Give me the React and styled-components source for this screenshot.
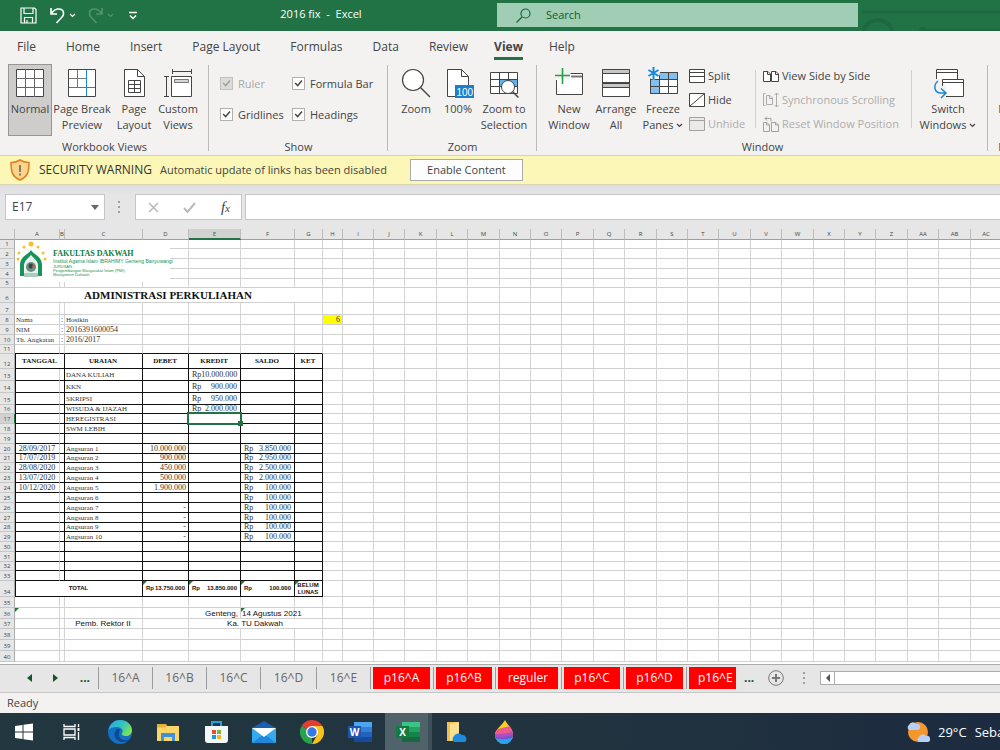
import React from "react";
import styled, { createGlobalStyle, css } from "styled-components";

const GlobalStyle = createGlobalStyle`
  *, *::before, *::after { box-sizing: border-box; }
  body { margin: 0; background: #e6e6e6; color: #444; font-family: "Open Sans", "Noto Sans", sans-serif; font-size: 11px; line-height: 16px; }
  button, input { font: inherit; color: inherit; margin: 0; padding: 0; border: 0; background: none; border-radius: 0; }
  a { color: inherit; text-decoration: none; }
  svg { display: block; flex: none; }
`;

const Page = styled.div`
  display: flex;
  flex-direction: column;
  height: 100vh;
  overflow: hidden;
`;

/* ---------- title bar ---------- */
const TitleBar = styled.header`
  display: grid;
  grid-template-columns: 145fr 352fr 361fr 142fr;
  align-items: center;
  height: 32px;
  flex: none;
  background: #217346;
  border-bottom: 1px solid #f8fbf9;
  color: #fff;
`;
const QuickAccess = styled.div`
  display: flex;
  align-items: center;
  padding-left: 20px;
`;
const QuickButton = styled.button`
  display: flex;
  align-items: center;
  gap: 4px;
  margin-right: ${(p) => p.$gap || 0}px;
  opacity: ${(p) => (p.disabled ? 0.22 : 1)};
`;
const DocTitle = styled.div`
  padding-bottom: 4px;
  text-align: center;
  white-space: pre;
`;
const SearchBox = styled.label`
  display: flex;
  align-items: center;
  gap: 15px;
  height: 24px;
  padding-left: 19px;
  margin-bottom: 1px;
  background: #a0ceb5;
  color: #0e5c2f;
  input { flex: 1; min-width: 0; outline: none; }
  input::placeholder { color: #0e5c2f; opacity: 1; }
`;
const TitleArt = styled.div`
  height: 31px;
  overflow: hidden;
`;

/* ---------- ribbon ---------- */
const TabRow = styled.nav`
  display: flex;
  flex: none;
  height: 29px;
  padding-left: 2px;
  background: #f3f2f1;
`;
const RibbonTab = styled.a`
  position: relative;
  padding: 0 ${(p) => (p.$active ? 11 : 15)}px;
  font-size: 12px;
  line-height: 30px;
  white-space: nowrap;
  font-weight: ${(p) => (p.$active ? 700 : 400)};
  ${(p) =>
    p.$active &&
    css`
      &::after {
        content: "";
        position: absolute;
        left: 11px;
        right: 11px;
        bottom: 1px;
        height: 3px;
        background: #217346;
      }
    `}
`;
const Ribbon = styled.section`
  display: flex;
  flex: none;
  height: 94px;
  overflow: hidden;
  background: #f3f2f1;
`;
const Group = styled.div`
  display: flex;
  flex: none;
  flex-direction: column;
  justify-content: space-between;
  width: ${(p) => p.$width}px;
  padding-top: 3px;
  position: relative;
  &::after {
    content: "";
    position: absolute;
    right: 0;
    top: 4px;
    bottom: 4px;
    width: 1px;
    background: #bcbab8;
  }
`;
const GroupBody = styled.div`
  display: flex;
  height: 72px;
  padding-left: ${(p) => p.$pad}px;
`;
const GroupLabel = styled.div`
  text-align: center;
  line-height: 16px;
`;
const BigButton = styled.button`
  display: flex;
  flex: none;
  flex-direction: column;
  align-items: center;
  width: ${(p) => p.$width}px;
  height: 72px;
  padding-top: 2px;
  line-height: 16px;
  white-space: nowrap;
  border: 1px solid ${(p) => (p.$active ? "#979593" : "transparent")};
  background: ${(p) => (p.$active ? "#cfcdcb" : "none")};
  svg { margin-bottom: 2px; }
`;
const LabelLine = styled.span`
  display: flex;
  align-items: center;
  gap: 3px;
  svg { margin-bottom: 0; }
`;
const CheckGrid = styled.div`
  display: grid;
  grid-template-columns: 72px auto;
  grid-auto-rows: 31px;
  padding: 4px 0 0 11px;
`;
const CheckLabel = styled.label`
  display: flex;
  align-items: center;
  gap: 5px;
  color: ${(p) => (p.$off ? "#a9a7a5" : "#444")};
  input {
    appearance: none;
    width: 13px;
    height: 13px;
    border: 1px solid ${(p) => (p.$off ? "#c3c1bf" : "#b3b1af")};
    background: ${(p) => (p.$off ? "#dddbd9" : "#fff")};
  }
  input::before {
    content: "";
    display: block;
    width: 11px;
    height: 11px;
    background: ${(p) => (p.$off ? "#a19f9d" : "#444")};
    clip-path: polygon(15% 50%, 25% 42%, 42% 60%, 76% 18%, 86% 27%, 43% 79%);
  }
`;
const SmallList = styled.div`
  display: flex;
  flex: none;
  flex-direction: column;
  width: ${(p) => p.$width}px;
  padding-left: ${(p) => p.$pad}px;
`;
const SmallButton = styled.button`
  display: flex;
  align-items: center;
  gap: 3px;
  height: 24px;
  white-space: nowrap;
  color: ${(p) => (p.disabled ? "#aeacaa" : "#444")};
`;
const InnerRule = styled.div`
  flex: none;
  width: 1px;
  height: 58px;
  margin-top: 6px;
  background: #d2d0ce;
`;

/* ---------- security bar ---------- */
const SecurityBar = styled.div`
  display: flex;
  align-items: center;
  flex: none;
  height: 30px;
  padding-left: 10px;
  background: #fcf7b6;
  border-top: 1px solid #d5d2b8;
  border-bottom: 1px solid #d8d5b8;
  white-space: nowrap;
`;
const Warning = styled.strong`
  margin: 0 8px 0 9px;
  font-size: 12px;
  font-weight: 400;
  color: #333;
`;
const EnableButton = styled.button`
  width: 113px;
  height: 22px;
  margin-left: 23px;
  && { border: 1px solid #ababab; background: #fdfdfd; }
`;

/* ---------- formula bar ---------- */
const FormulaBar = styled.div`
  display: flex;
  align-items: center;
  flex: none;
  height: 44px;
  padding: 0 0 0 5px;
  background: linear-gradient(#dcdce3, #e6e6e6 10px);
`;
const NameBox = styled.div`
  display: flex;
  align-items: center;
  width: 100px;
  height: 26px;
  padding: 0 5px 0 6px;
  border: 1px solid #c6c6c6;
  background: #fff;
  input { flex: 1; min-width: 0; font-size: 12px; outline: none; }
`;
const DotHandle = styled.span`
  flex: none;
  width: 2px;
  height: 12px;
  margin: 0 15px 0 ${(p) => p.$before}px;
  background: repeating-linear-gradient(#a0a0a0 0 2px, transparent 2px 5px);
`;
const FxBox = styled.div`
  display: flex;
  align-items: center;
  justify-content: space-between;
  width: 107px;
  height: 26px;
  padding: 0 11px 0 12px;
  border: 1px solid #c6c6c6;
  background: #fff;
`;
const FxButton = styled.button`
  && { font: italic 400 15px "Liberation Serif", serif; }
  sub { font-size: 11px; vertical-align: baseline; }
`;
const FormulaInput = styled.input`
  && { flex: 1; height: 26px; margin-left: 3px; border: 1px solid #c6c6c6; border-right: 0; background: #fff; }
`;

/* ---------- sheet ---------- */
const SheetArea = styled.main`
  position: relative;
  flex: 1;
  min-height: 0;
  overflow: hidden;
  background: #fff;
`;
const Grid = styled.table`
  width: 0;
  table-layout: fixed;
  border-collapse: separate;
  border-spacing: 0;
  font-family: "Liberation Serif", serif;
  font-size: 8px;
  line-height: 8px;
  color: #333;
`;
const headCell = css`
  padding: 0;
  background: ${(p) => (p.$on ? "#d2d2d2" : "#e6e6e6")};
  color: ${(p) => (p.$on ? "#217346" : "#444")};
  font: 400 6px/8px "Open Sans", sans-serif;
  text-align: center;
`;
const ColHead = styled.th`
  ${headCell}
  height: 11px;
  border-right: 1px solid #bdbdbd;
  border-bottom: ${(p) => (p.$on ? "2px solid #217346" : "1px solid #9f9f9f")};
`;
const RowHead = styled.th`
  ${headCell}
  vertical-align: bottom;
  border-right: 1px solid ${(p) => (p.$on ? "#217346" : "#ababab")};
  border-bottom: 1px solid #c6c6c6;
`;
const Cell = styled.td`
  position: relative;
  padding: 0 2px 0 1px;
  white-space: nowrap;
  line-height: ${(p) => (p.$size === 6 ? 7 : 8)}px;
  vertical-align: ${(p) => p.$valign || "bottom"};
  text-align: ${(p) => p.$align || "left"};
  font-weight: ${(p) => (p.$bold ? 700 : 400)};
  font-size: ${(p) => p.$size || 8}px;
  font-family: ${(p) => (p.$sans ? '"Liberation Sans", sans-serif' : "inherit")};
  background: ${(p) => p.$fill || "none"};
  color: ${(p) => (p.$bold || p.$sans ? "#111" : "inherit")};
  border-right: 1px solid ${(p) => p.$right};
  border-bottom: 1px solid ${(p) => p.$bottom};
  ${(p) => p.$left && css`border-left: 1px solid #111;`}
  ${(p) =>
    p.$flag &&
    css`
      &::before {
        content: "";
        position: absolute;
        left: 0;
        top: 0;
        border-top: 4px solid #1b7a2c;
        border-right: 4px solid transparent;
      }
    `}
`;
const Cursor = styled.span`
  position: absolute;
  z-index: 1;
  inset: -2px;
  border: 2px solid #217346;
  &::after {
    content: "";
    position: absolute;
    right: -3px;
    bottom: -3px;
    width: 5px;
    height: 5px;
    background: #217346;
  }
`;
const Money = styled.span`
  display: flex;
  justify-content: space-between;
  padding: 0 1px 0 2px;
`;
const Letterhead = styled.div`
  position: absolute;
  left: 15px;
  top: 11px;
  display: flex;
  gap: 4px;
  width: 155px;
  height: 42px;
  background: #fff;
  color: #159457;
`;
const LetterText = styled.div`
  padding-top: 10px;
  white-space: nowrap;
  font: 400 4px/4px "Liberation Sans", sans-serif;
`;
const Faculty = styled.div`
  font: 700 8px/8px "Liberation Serif", serif;
  color: #0b7d3f;
`;
const Institute = styled.div`
  font-size: 5px;
  line-height: 7px;
`;

/* ---------- sheet tabs, status, taskbar ---------- */
const SheetTabs = styled.nav`
  display: flex;
  align-items: center;
  flex: none;
  height: 29px;
  padding-bottom: 1px;
  border-top: 1px solid #ababab;
  border-bottom: 1px solid #c6c6c6;
  background: #e6e6e6;
`;
const Arrows = styled.div`
  display: flex;
  align-items: center;
  justify-content: space-between;
  width: 98px;
  padding: 0 8px 0 27px;
`;
const MoreButton = styled.button`
  && { font-size: 12px; font-weight: 700; color: #14552d; }
  && { margin-left: ${(p) => p.$before || 0}px; }
`;
const SheetTab = styled.a`
  width: ${(p) => p.$width}px;
  height: 22px;
  border-left: 1px solid #9b9b9b;
  font-size: 12px;
  line-height: 21px;
  text-align: center;
  white-space: nowrap;
  overflow: hidden;
  color: #666;
`;
const RedTab = styled(SheetTab)`
  padding-left: 2px;
  padding-right: ${(p) => (p.$cut ? 0 : 3)}px;
  color: #fff;
  span { display: block; height: 22px; background: #f00; text-align: ${(p) => (p.$cut ? "left" : "center")}; padding-left: ${(p) => (p.$cut ? 9 : 0)}px; }
`;
const AddButton = styled.button`
  && { margin-left: 14px; }
`;
const ScrollBar = styled.div`
  display: flex;
  flex: 1;
  height: 14px;
  border: 1px solid #ababab;
  border-right: 0;
  background: #fff;
`;
const ScrollButton = styled.button`
  display: grid;
  place-items: center;
  width: 14px;
  && { border-right: 1px solid #ababab; }
`;
const StatusBar = styled.footer`
  flex: none;
  height: 20px;
  padding-left: 7px;
  line-height: 20px;
  background: #f3f2f1;
`;
const TaskBar = styled.div`
  display: flex;
  flex: none;
  height: 37px;
  background: linear-gradient(90deg, #223740, #21333f 60%, #1c2b40);
  color: #fff;
`;
const TaskButton = styled.button`
  display: grid;
  place-items: center;
  flex: none;
  width: 48px;
  && { background: ${(p) => (p.$active ? "linear-gradient(90deg, transparent 1px, #50626a 1px 44px, #3d5059 44px)" : "none")}; }
`;
const Weather = styled.button`
  display: flex;
  align-items: center;
  gap: 8px;
  width: 94px;
  margin-left: auto;
  overflow: hidden;
  white-space: nowrap;
  && { font-size: 13px; }
`;

/* ---------- icons ---------- */
const S = ({ w, h = w, box, children, ...rest }) => (
  <svg width={w} height={h} viewBox={box || `0 0 ${w} ${h}`} fill="none" stroke="#444" strokeWidth="1" aria-hidden="true" {...rest}>
    {children}
  </svg>
);
const Chevron = ({ color = "#444" }) => (
  <S w={7} h={5} stroke={color} strokeWidth="1.2"><path d="M1 1l2.500 2.500L6 1" /></S>
);
const icons = {
  normal: <S w={32}><path fill="#fff" d="M2.500 2.500h27v27h-27z" /><path d="M11.500 2v28M20.500 2v28M2 11.500h28M2 20.500h28" stroke="#666" /></S>,
  pageBreak: <S w={32}><path fill="#fff" d="M2.500 2.500h27v27h-27z" /><path d="M11.500 3v17M3 11.500h17" stroke="#777" /><path d="M20.500 3v26M3 20.500h26" stroke="#1b87d6" strokeWidth="1" /></S>,
  page: <S w={32}><path fill="#fff" d="M6.500 2.500h13l7 7v20h-20z" /><path d="M19.500 2.500v7h7M10.500 13.500h12v12h-12zM10.500 17.500h12M10.500 21.500h12M16.500 13.500v12" /></S>,
  custom: <S w={32}><path fill="#fff" d="M9.500 9.500h20v20h-20z" /><path d="M12.500 12.500h14v3h-14z" fill="#d8d6d4" stroke="#777" /><path d="M10.500 4.500h19M10.500 2v5M29.500 2v5M4.500 9v20M2 9.500h5M2 29.500h5" /></S>,
  zoom: <S w={32}><circle cx="13" cy="13" r="10.500" fill="#fff" strokeWidth="1.200" /><path d="M20.500 20.500l9.500 9.500" strokeWidth="1.400" /></S>,
  hundred: (
    <S w={32}><path fill="#fff" d="M5.500 2.500h14l7 7v20h-21z" /><path d="M19.500 2.500v7h7" /><path fill="#1b7fcc" stroke="none" d="M13 18h19v13H13z" />
      <text x="14.500" y="28.500" fontSize="10" fill="#fff" stroke="none" fontFamily="Liberation Sans, sans-serif">100</text></S>
  ),
  zoomSel: <S w={32}><path fill="#fff" d="M2.500 5.500h27v21h-27z" /><path fill="#62b0ec" stroke="none" d="M11 12h18v8H11z" /><path d="M11.500 5v21M20.500 5v21M2 12.500h28M2 19.500h28" /><circle cx="20" cy="20" r="6.500" fill="#fff" /><path d="M24.500 24.500l6 6" strokeWidth="1.500" /></S>,
  newWin: <S w={32}><path fill="#fff" stroke="none" d="M3 6h27v22H3z" /><path fill="#f3f2f1" stroke="none" d="M2 0h15v12H2z" /><path d="M3.500 13v14.500h26v-21h-12" /><path d="M18 9.500h11" stroke="#777" strokeWidth="2" /><path d="M9.500 1v16M2 8.500h15" stroke="#22a045" strokeWidth="1.600" /></S>,
  arrange: <S w={32}><path fill="#fff" d="M2.500 2.500h27v27h-27z" /><path fill="#c8c6c4" d="M2.500 2.500h27v4h-27zM2.500 16.500h27v4h-27z" /><path d="M2.500 15.500h27" /></S>,
  freeze: (
    <S w={32}><path fill="#fff" d="M3.500 5.500h27v21h-27z" /><path fill="#83c0f0" stroke="none" d="M12 6h18v6H12zM4 12h8v14H4z" />
      <path d="M12.500 5v21M21.500 5v21M3 12.500h27M3 19.500h27M30.500 5v21.500h-27V12" /><circle cx="6.500" cy="6" r="6.500" fill="#f3f2f1" stroke="none" />
      <path d="M6.500 0v12M1.500 3l10 6M11.500 3l-10 6" stroke="#1b87d6" strokeWidth="2" /></S>
  ),
  switchWin: (
    <S w={32}><path fill="#fff" d="M4.500 12V2.500h21V12" /><path d="M4 5.500h21" /><path fill="#fff" d="M10.500 12.500h21v17h-21z" /><path d="M10 15.500h22" />
      <path fill="#f3f2f1" stroke="none" d="M2 19h12v12H2z" /><path d="M6 14c-5 4-4 12 3 12h4M9 21.500l5 4.500-5 5" stroke="#1b87d6" strokeWidth="1.500" /></S>
  ),
  split: <S w={16}><path fill="#fff" d="M.5 1.500h15v13H.5z" /><path d="M0 4.500h16M0 8.500h16" /></S>,
  hide: <S w={16}><path fill="#fff" d="M.5 1.500h15v13H.5z" /><path d="M.5 14.500l15-13" /></S>,
  unhide: <S w={16} stroke="#a3a19f"><path fill="#eceae8" d="M.5 1.500h15v13H.5z" /><path d="M0 4.500h16" strokeWidth="1" /></S>,
  side: <S w={16}><path fill="#fff" d="M.5 3.500H5l2.500 2.500v7.500h-7zM8.500 3.500H13l2.500 2.500v7.500h-7z" /><path d="M4.500 3v3.500h3M12.500 3v3.500h3" /></S>,
  sync: <S w={16} stroke="#aeacaa"><path d="M2.500 1.500h-2v12h2M3.500 3.500H7l2.500 2.500v6.500h-6zM6.500 3.500v3h3M13.500 1v14M11.500 3l2-2 2 2M11.500 13l2 2 2-2" /></S>,
  reset: <S w={16} stroke="#a3a19f"><path d="M.5 6.500H4l2.500 2.500v6.500h-6zM8.500 6.500H13l2.500 2.500v6.500h-7zM12.500 6v3h3M3.500 6v3h3M2 2.500h6v3M4 .5l-2 2 2 2" /></S>,
};

const SaveIcon = () => (
  <S w={17} stroke="#fff" strokeWidth="1.200"><path d="M1 1h13.500L16 2.500V16H1zM4 1v5.500h9V1M4.500 16v-5.500h8V16M7 13v3" /></S>
);
const UndoIcon = () => (
  <S w={15} h={17} stroke="#fff" strokeWidth="1.600"><path d="M1 1v6h6M1.500 6.500C6-.5 14 1.500 13.500 7c0 2.500-3.500 5-7 9" /></S>
);
const RedoIcon = () => (
  <S w={15} h={17} stroke="#fff" strokeWidth="1.600"><path d="M14 1v6H8M13.500 6.500C9-.5 1 1.500 1.500 7c0 2.500 3.500 5 7 9" /></S>
);
const Shield = () => (
  <S w={20} h={22}><path d="M10 1c3 2 6 2.500 9 2.500 0 9-1 14-9 17.500C2 17.500 1 12.500 1 3.500 4 3.500 7 3 10 1z" fill="#fbd58b" stroke="#e08123" strokeWidth="1.600" /><path d="M10 6v7M10 14.500v2" stroke="#666" strokeWidth="1.600" /></S>
);
const Crest = () => (
  <S w={34} h={42} stroke="none">
    {[[3, 19], [4, 13], [9, 7], [16, 4], [23, 7], [28, 13], [30, 19]].map(([x, y], i) => (
      <circle key={i} cx={x} cy={y} r={i === 3 ? 2.5 : 1.5} fill="#f7bf2d" />
    ))}
    <path d="M16 10c2 4 11 6 11 15v11h-4V26c0-6-5-8-7-11-2 3-7 5-7 11v10H5V25c0-9 9-11 11-15z" fill="#17925a" />
    <path d="M16 16c2 3 6 5 6 10v10H10V26c0-5 4-7 6-10z" fill="#e4f1ea" />
    <circle cx="16" cy="27" r="5" fill="#6e8f80" /><circle cx="16" cy="26" r="2.500" fill="#2a4a42" />
    <path d="M18 23l2 4-3 1z" fill="#cc5a4a" /><path d="M9 33h14v4H9z" fill="#a9cdbb" />
  </S>
);

function OfficeIcon({ letter, colors, badge }) {
  return (
    <S w={24} h={22} stroke="none">
      {colors.map((c, i) => <path key={c} fill={c} d={`M6 ${1 + i * 5}h18v5H6z`} />)}
      <path fill={badge} d="M0 5h13v12H0z" />
      <text x="6.500" y="15" fontSize="10" fontWeight="700" textAnchor="middle" fill="#fff" fontFamily="Open Sans, sans-serif">{letter}</text>
    </S>
  );
}
const task = {
  Start: <S w={18} stroke="none"><path fill="#fff" d="M0 3l7.500-1v6.500H0zM8.500 1.800L18 .5v8H8.500zM0 9.500h7.500V16L0 15zM8.500 9.500H18v8l-9.500-1.300z" /></S>,
  "Task view": <S w={18} stroke="#fff" strokeWidth="1.300"><path d="M1 1v2.500h11V1M1 6h11v6H1zM1 17v-2.500h11V17M15.500 1v3M15.500 9v8" /><path d="M14.500 5h2v3h-2z" fill="#fff" stroke="none" /></S>,
  Edge: (
    <S w={26} stroke="none"><defs><linearGradient id="eg" x1="0" y1="0" x2="1" y2=".5"><stop stopColor="#2aa7e0" /><stop offset=".6" stopColor="#33c5c0" /><stop offset="1" stopColor="#7be05a" /></linearGradient></defs>
      <circle cx="13" cy="13" r="12" fill="#1470c4" /><path d="M1.500 11C3 4 8 1 13 1c7 0 12 5 12 10 0 4-3 6-6 6-3 0-5-1-4-3 2-3-1-6-5-6-4 0-7 1-8.500 3z" fill="url(#eg)" />
      <path d="M9 11c-4 5 0 12 7 12 3 0 6-1 7-3-6 3-12 0-11-6 0-2 1-2 1-3-1-2-3-1-4 0z" fill="#0e4a94" /></S>
  ),
  Explorer: <S w={24} h={22} stroke="none"><path fill="#e8a722" d="M1 3h9l2 3H1z" /><path fill="#fbd568" d="M1 5h22v15H1z" /><path fill="#e9b23c" d="M1 3.500h9v3H1z" /><path fill="#3f92d8" d="M5 12h14v8h-3v-4H8v4H5z" /></S>,
  Store: (
    <S w={24} h={24} stroke="none"><path d="M8 6V2h9v4" stroke="#22a3e0" strokeWidth="2" /><path fill="#f4f7f9" d="M1 6h23v14q0 3-3 3H4q-3 0-3-3z" />
      <path fill="#e8502c" d="M8 10h4v4H8z" /><path fill="#7db82c" d="M13 10h4v4h-4z" /><path fill="#1d9be0" d="M8 15h4v4H8z" /><path fill="#f7b718" d="M13 15h4v4h-4z" /></S>
  ),
  Mail: <S w={24} h={24} stroke="none"><path fill="#1a5fb0" d="M0 8l12-7 12 7v8H0z" /><path fill="#35a8ee" d="M0 8h24v15H0z" /><path fill="#1e86dc" d="M0 23L12 14l12 9z" /><path fill="#fff" d="M0 8h24L12 17z" /></S>,
  Chrome: (
    <S w={24} stroke="none"><path fill="#e43e32" d="M12 12L1.600 6A12 12 0 0 1 22.400 6z" /><path fill="#28a24b" d="M12 12v12A12 12 0 0 1 1.600 6z" />
      <path fill="#f9c31a" d="M12 6h10.400a12 12 0 0 1-10.400 18l5.200-9z" /><circle cx="12" cy="12" r="6" fill="#fff" /><circle cx="12" cy="12" r="4.700" fill="#3578e5" /></S>
  ),
  Word: <OfficeIcon letter="W" colors={["#4ca5ee", "#2f80d8", "#2262be", "#164a9e"]} badge="#1c55ad" />,
  Excel: <OfficeIcon letter="X" colors={["#3cc483", "#24a266", "#17834d", "#186a3e"]} badge="#107c41" />,
  OneDrive: <S w={22} h={22} stroke="none"><path fill="#f0c050" d="M2 1h11v19H2z" /><path fill="#fce092" d="M5 3l9-2v14l-9 5z" /><path fill="#1e8be0" d="M9 21a4 4 0 0 1 0-6 5 5 0 0 1 8-1 4 4 0 0 1 3 7z" /></S>,
  "Paint 3D": (
    <S w={20} h={24} stroke="none"><defs><clipPath id="drop"><path d="M11 0c2 5 8 8 8 15a9 9 0 0 1-18 0C1 9 8 6 11 0z" /></clipPath></defs>
      <g clipPath="url(#drop)"><path fill="#f9cf28" d="M0 0h20v24H0z" /><path fill="#ef5a8c" d="M0 10L20 5v19H0z" /><path fill="#b14bc0" d="M0 14q10 1 20-3v13H0z" /><path fill="#7057d0" d="M0 16q10 3 20-2v10H0z" /><path fill="#27a5e8" d="M0 18q10 3 20-1v7H0z" /></g></S>
  ),
};
const WeatherIcon = () => (
  <S w={24} h={22} stroke="none"><circle cx="12" cy="11" r="10" fill="#f4982c" /><path fill="#b9cff5" d="M3 9a3 3 0 0 1 0-5 4 4 0 0 1 7-1 3 3 0 0 1 2 6z" /><path fill="#b9cff5" d="M13 21a3 3 0 0 1 0-5 4 4 0 0 1 7-1 3 3 0 0 1 2 6z" /></S>
);

/* ---------- sheet data ---------- */
const COLS = "A B C D E F G H I J K L M N O P Q R S T U V W X Y Z AA AB AC".split(" ");
const widths = COLS.map((_, i) => [45, 5, 78, 46, 52, 54, 28, 20][i] ?? [31, 31, 32, 31, 32][(i - 8) % 5]);
const heights = [9, 10, 10, 10, 9, 15, 12, 10, 10, 10, 9, 15, 12, 12, 12, 9, 10, 10, 10, 10, 9, 10, 10, 10, 10, 10, 10, 9, 10, 10, 10, 9, 10, 16, 11, 11, 10, 11, 11, 11];

const money = (n) => <Money><span>Rp</span><span>{n}</span></Money>;
const cells = {
  A6: { v: "ADMINISTRASI PERKULIAHAN", span: 7, bold: true, align: "center", size: 11, valign: "middle" },
  A8: { v: "Nama", size: 7 }, B8: { v: ":" }, C8: { v: "Hosikin", size: 7 }, H8: { v: "6", fill: "#ff0", align: "right" },
  A9: { v: "NIM", size: 7 }, B9: { v: ":" }, C9: { v: "2016391600054" },
  A10: { v: "Th. Angkatan", size: 7 }, B10: { v: ":" }, C10: { v: "2016/2017" },
  A12: { v: "TANGGAL", span: 2, head: true }, C12: { v: "URAIAN", head: true }, D12: { v: "DEBET", head: true },
  E12: { v: "KREDIT", head: true }, F12: { v: "SALDO", head: true }, G12: { v: "KET", head: true },
  E13: { v: money("10.000.000") }, E14: { v: money("900.000") }, E15: { v: money("950.000") }, E16: { v: money("2.000.000") },
  E17: { v: <Cursor /> },
  A34: { v: "TOTAL", span: 3, total: true, align: "center" },
  D34: { v: money("13.750.000"), total: true, flag: true }, E34: { v: money("13.850.000"), total: true, flag: true },
  F34: { v: money("100.000"), total: true, flag: true }, G34: { v: <>BELUM<br />LUNAS</>, total: true, flag: true, align: "center" },
  A36: { flag: true },
  E36: { v: "Genteng,", sans: true, align: "right" }, F36: { v: "14 Agustus 2021", sans: true, flag: true },
  C37: { v: "Pemb. Rektor II", sans: true, align: "center" }, E37: { v: "Ka. TU Dakwah", span: 3, sans: true, align: "center" },
};
["DANA KULIAH", "KKN", "SKRIPSI", "WISUDA & IJAZAH", "HEREGISTRASI", "SWM LEBIH"].forEach((v, i) => { cells[`C${13 + i}`] = { v, size: 7 }; });
["28/09/2017", "17/07/2019", "28/08/2020", "13/07/2020", "10/12/2020"].forEach((v, i) => { cells[`A${20 + i}`] = { v, align: "center" }; });
["10.000.000", "900.000", "450.000", "500.000", "1.900.000", null, "-", "-", "-", "-"].forEach((v, i) => { if (v) cells[`D${20 + i}`] = { v, align: "right" }; });
["3.850.000", "2.950.000", "2.500.000", "2.000.000"].concat(Array(6).fill("100.000")).forEach((v, i) => {
  cells[`F${20 + i}`] = { v: money(v) };
  cells[`C${20 + i}`] = { v: `Angsuran ${i + 1}`, size: 7 };
});

function renderRow(r) {
  const out = [];
  for (let c = 0; c < COLS.length; ) {
    const d = cells[COLS[c] + r] || {};
    const span = d.span || 1;
    const last = c + span - 1;
    const framed = r >= 12 && r <= 34 && c < 7;
    const strong = d.head || d.total;
    const centred = strong || (r >= 13 && r <= 15);
    out.push(
      <Cell
        key={c}
        colSpan={span}
        $align={d.align || (d.head ? "center" : undefined)}
        $valign={d.valign || (centred ? "middle" : undefined)}
        $bold={d.bold || strong}
        $sans={d.sans || d.total}
        $size={d.size || (d.head ? 7 : d.total ? 6 : 8)}
        $fill={d.fill}
        $flag={d.flag}
        $left={framed && c === 0}
        $right={framed && last !== 0 ? "#111" : "#d4d4d4"}
        $bottom={framed || (r === 11 && c < 7) ? "#111" : "#d0d0d0"}
      >
        {d.v}
      </Cell>
    );
    c += span;
  }
  return out;
}

const tabs = ["File", "Home", "Insert", "Page Layout", "Formulas", "Data", "Review", "View", "Help"];

const Big = ({ icon, width, lines, active, menu }) => (
  <BigButton type="button" $width={width} $active={active}>
    {icons[icon]}
    {lines.map((l, i) => (
      <LabelLine key={l}>{l}{menu && i === lines.length - 1 && <Chevron />}</LabelLine>
    ))}
  </BigButton>
);
const MacroButton = () => (
  <BigButton type="button" $width={44}>
    <S w={32}><path fill="#fff" d="M6.500 2.500h22v27h-22z" /></S>
    <LabelLine>Macros</LabelLine>
  </BigButton>
);
const Check = ({ label, off }) => (
  <CheckLabel $off={off}><input type="checkbox" defaultChecked disabled={off} />{label}</CheckLabel>
);

export default function App() {
  return (
    <Page>
      <GlobalStyle />
      <TitleBar>
        <QuickAccess>
          <QuickButton type="button" aria-label="Save" $gap={13}><SaveIcon /></QuickButton>
          <QuickButton type="button" aria-label="Undo" $gap={12}><UndoIcon /><Chevron color="#fff" /></QuickButton>
          <QuickButton type="button" aria-label="Redo" disabled $gap={15}><RedoIcon /><Chevron color="#fff" /></QuickButton>
          <QuickButton type="button" aria-label="Customize toolbar"><S w={8} h={9} stroke="#fff" strokeWidth="1.400"><path d="M0 1.500h8M1 4.500l3 3 3-3" /></S></QuickButton>
        </QuickAccess>
        <DocTitle>{"2016 fix  -  Excel"}</DocTitle>
        <SearchBox>
          <S w={15} stroke="#17663a" strokeWidth="1.200"><circle cx="9.500" cy="5.500" r="4.500" /><path d="M6 9l-5.500 5.500" /></S>
          <input type="search" placeholder="Search" aria-label="Search" />
        </SearchBox>
        <TitleArt>
          <S w={142} h={31} stroke="#1d6840"><path d="M4 12h138M62 30.500h80" strokeWidth="3" /><circle cx="20" cy="35" r="15" strokeWidth="4" /><circle cx="65" cy="31" r="3" strokeWidth="2" /></S>
        </TitleArt>
      </TitleBar>

      <TabRow>
        {tabs.map((t) => <RibbonTab key={t} href="#" $active={t === "View"}>{t}</RibbonTab>)}
      </TabRow>

      <Ribbon>
        <Group $width={209}>
          <GroupBody $pad={8}>
            <Big icon="normal" width={44} lines={["Normal"]} active />
            <Big icon="pageBreak" width={60} lines={["Page Break", "Preview"]} />
            <Big icon="page" width={44} lines={["Page", "Layout"]} />
            <Big icon="custom" width={44} lines={["Custom", "Views"]} />
          </GroupBody>
          <GroupLabel>Workbook Views</GroupLabel>
        </Group>
        <Group $width={179}>
          <CheckGrid>
            <Check label="Ruler" off /><Check label="Formula Bar" />
            <Check label="Gridlines" /><Check label="Headings" />
          </CheckGrid>
          <GroupLabel>Show</GroupLabel>
        </Group>
        <Group $width={149}>
          <GroupBody $pad={6}>
            <Big icon="zoom" width={44} lines={["Zoom"]} />
            <Big icon="hundred" width={40} lines={["100%"]} />
            <Big icon="zoomSel" width={52} lines={["Zoom to", "Selection"]} />
          </GroupBody>
          <GroupLabel>Zoom</GroupLabel>
        </Group>
        <Group $width={451}>
          <GroupBody $pad={8}>
            <Big icon="newWin" width={48} lines={["New", "Window"]} />
            <Big icon="arrange" width={46} lines={["Arrange", "All"]} />
            <Big icon="freeze" width={48} lines={["Freeze", "Panes"]} menu />
            <SmallList $width={68} $pad={2}>
              <SmallButton type="button">{icons.split}Split</SmallButton>
              <SmallButton type="button">{icons.hide}Hide</SmallButton>
              <SmallButton type="button" disabled>{icons.unhide}Unhide</SmallButton>
            </SmallList>
            <InnerRule />
            <SmallList $width={155} $pad={7}>
              <SmallButton type="button">{icons.side}View Side by Side</SmallButton>
              <SmallButton type="button" disabled>{icons.sync}Synchronous Scrolling</SmallButton>
              <SmallButton type="button" disabled>{icons.reset}Reset Window Position</SmallButton>
            </SmallList>
            <InnerRule />
            <Big icon="switchWin" width={72} lines={["Switch", "Windows"]} menu />
          </GroupBody>
          <GroupLabel>Window</GroupLabel>
        </Group>
        <Group $width={58}>
          <GroupBody $pad={7}><MacroButton /></GroupBody>
          <GroupLabel>Macros</GroupLabel>
        </Group>
      </Ribbon>

      <SecurityBar>
        <Shield />
        <Warning>SECURITY WARNING</Warning>
        <span>Automatic update of links has been disabled</span>
        <EnableButton type="button">Enable Content</EnableButton>
      </SecurityBar>

      <FormulaBar>
        <NameBox>
          <input defaultValue="E17" aria-label="Name box" />
          <button type="button" aria-label="Open name list"><S w={8} h={5} stroke="none"><path fill="#666" d="M0 0h8L4 5z" /></S></button>
        </NameBox>
        <DotHandle $before={13} />
        <FxBox>
          <button type="button" aria-label="Cancel"><S w={11} stroke="#bbb" strokeWidth="1.600"><path d="M1 1l9 9M10 1l-9 9" /></S></button>
          <button type="button" aria-label="Enter"><S w={13} h={11} stroke="#bbb" strokeWidth="2"><path d="M1 6l3.500 4L12 1" /></S></button>
          <FxButton type="button">f<sub>x</sub></FxButton>
        </FxBox>
        <FormulaInput aria-label="Formula" />
      </FormulaBar>

      <SheetArea>
        <Grid>
          <colgroup>
            <col style={{ width: 15 }} />
            {widths.map((w, i) => <col key={i} style={{ width: w }} />)}
          </colgroup>
          <thead>
            <tr><ColHead />{COLS.map((c) => <ColHead key={c} $on={c === "E"}>{c}</ColHead>)}</tr>
          </thead>
          <tbody>
            {heights.map((h, i) => (
              <tr key={i} style={{ height: h }}>
                <RowHead $on={i === 16}>{i + 1}</RowHead>
                {renderRow(i + 1)}
              </tr>
            ))}
          </tbody>
        </Grid>
        <Letterhead>
          <Crest />
          <LetterText>
            <Faculty>FAKULTAS DAKWAH</Faculty>
            <Institute>Institut Agama Islam IBRAHIMY Genteng Banyuwangi</Institute>
            <div>JURUSAN :</div>
            <div>Pengembangan Masyarakat Islam (PMI)</div>
            <div>Manajemen Dakwah</div>
          </LetterText>
        </Letterhead>
      </SheetArea>

      <SheetTabs>
        <Arrows>
          <button type="button" aria-label="Previous sheet"><S w={5} h={8} stroke="none"><path fill="#14552d" d="M5 0v8L0 4z" /></S></button>
          <button type="button" aria-label="Next sheet"><S w={5} h={8} stroke="none"><path fill="#14552d" d="M0 0v8l5-4z" /></S></button>
          <MoreButton type="button">...</MoreButton>
        </Arrows>
        {["16^A", "16^B", "16^C", "16^D", "16^E"].map((t) => <SheetTab key={t} href="#" $width={t === "16^D" ? 56 : 54}>{t}</SheetTab>)}
        <RedTab href="#" $width={63}><span>p16^A</span></RedTab>
        <RedTab href="#" $width={62}><span>p16^B</span></RedTab>
        <RedTab href="#" $width={66}><span>reguler</span></RedTab>
        <RedTab href="#" $width={62}><span>p16^C</span></RedTab>
        <RedTab href="#" $width={63}><span>p16^D</span></RedTab>
        <RedTab href="#" $width={50} $cut><span>p16^E</span></RedTab>
        <MoreButton type="button" $before={8}>...</MoreButton>
        <AddButton type="button" aria-label="New sheet"><S w={16} stroke="#777"><circle cx="8" cy="8" r="7.300" /><path d="M8 4v8M4 8h8" strokeWidth="2" /></S></AddButton>
        <DotHandle $before={19} />
        <ScrollBar><ScrollButton type="button" aria-label="Scroll left"><S w={4} h={8} stroke="none"><path fill="#555" d="M4 0v8L0 4z" /></S></ScrollButton></ScrollBar>
      </SheetTabs>
      <StatusBar>Ready</StatusBar>
      <TaskBar>
        {Object.entries(task).map(([name, icon]) => (
          <TaskButton key={name} type="button" aria-label={name} $active={name === "Excel"}>{icon}</TaskButton>
        ))}
        <Weather type="button"><WeatherIcon /><span>29°C</span><span>Sebagian</span></Weather>
      </TaskBar>
    </Page>
  );
}
